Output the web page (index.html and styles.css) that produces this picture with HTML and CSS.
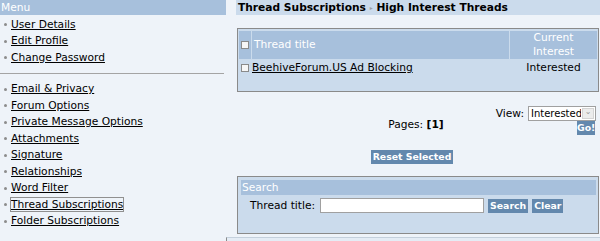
FILE: index.html
```html
<!DOCTYPE html>
<html lang="en">
<head>
	<meta charset="UTF-8">
	<title>Thread Subscriptions</title>
	<link rel="stylesheet" href="styles.css">
</head>
<body>
<div class="frames">
	<div class="nav">
		<div class="nav-head">Menu</div>
		<ul class="nav-list first">
			<li><a href="#">User Details</a></li>
			<li><a href="#">Edit Profile</a></li>
			<li><a href="#">Change Password</a></li>
		</ul>
		<hr class="nav-rule">
		<ul class="nav-list">
			<li><a href="#">Email &amp; Privacy</a></li>
			<li><a href="#">Forum Options</a></li>
			<li><a href="#">Private Message Options</a></li>
			<li><a href="#">Attachments</a></li>
			<li><a href="#">Signature</a></li>
			<li><a href="#">Relationships</a></li>
			<li><a href="#">Word Filter</a></li>
			<li><a href="#" class="focused">Thread Subscriptions</a></li>
			<li><a href="#">Folder Subscriptions</a></li>
		</ul>
	</div>
	<div class="main">
		<h1 class="crumb">Thread Subscriptions <span class="sep">&#9656;</span> High Interest Threads</h1>
		<div class="box">
			<table class="threads">
				<tr>
					<th class="check"><input type="checkbox"></th>
					<th class="title">Thread title</th>
					<th class="interest">Current<br>Interest</th>
				</tr>
				<tr>
					<td class="check"><input type="checkbox"></td>
					<td><a href="#">BeehiveForum.US Ad Blocking</a></td>
					<td class="interest">Interested</td>
				</tr>
				<tr class="spacer">
					<td colspan="3">&nbsp;</td>
				</tr>
			</table>
		</div>
		<div class="pager">
			<div></div>
			<div class="pages">Pages: <b>[1]</b></div>
			<div class="view">
				<div class="view-line">
					View:
					<span class="select">
						<select>
							<option>Interested</option>
						</select>
						<span class="select-arrow">&#8964;</span>
					</span>
				</div>
				<button class="button go">Go!</button>
			</div>
		</div>
		<div class="reset">
			<button class="button">Reset Selected</button>
		</div>
		<div class="box panel">
			<div class="panel-head">Search</div>
			<div class="search-row">
				<label>Thread title:</label>
				<input type="text" class="text">
				<button class="button">Search</button>
				<button class="button">Clear</button>
			</div>
		</div>
	</div>
</div>
<div class="foot"></div>
</body>
</html>
```

FILE: styles.css
```css
body {
	margin: 0;
	background: #eef3f9;
	font-family: "DejaVu Sans", Verdana, sans-serif;
	font-size: 8pt;
	color: #000;
}
a {
	color: #000;
}
.frames {
	display: flex;
	height: 237px;
	overflow: hidden;
}
.nav {
	width: 226px;
	flex: none;
}
.nav-head {
	height: 15px;
	line-height: 15px;
	padding-left: 1px;
	background: #a7c0dc;
	color: #fff;
}
.nav-list {
	list-style: none;
	margin: 0;
	padding: 0;
}
.nav-list.first {
	padding-top: 1.5px;
}
.nav-list li {
	line-height: 16.5px;
	padding-left: 4px;
}
.nav-list li::before {
	content: "";
	display: inline-block;
	width: 3px;
	height: 3px;
	margin-right: 4px;
	border-radius: 50%;
	background: #8c8c8c;
	vertical-align: middle;
}
.nav-list a.focused {
	outline: 1px solid #909090;
	outline-offset: 0;
}
.nav-rule {
	margin: 6.5px 2px 7.5px 0;
	border: 0;
	border-top: 1px solid #a4a4a4;
	height: 0;
}
.main {
	flex: 1;
	min-width: 0;
}
.crumb {
	margin: 0 0 13px 10px;
	height: 15px;
	line-height: 15px;
	padding-left: 2px;
	background: #cbdbec;
	font-size: 8pt;
	font-weight: bold;
}
.sep {
	color: #a0a0a0;
	font-size: 6px;
	vertical-align: 1px;
}
.box {
	margin: 0 1px 0 11px;
	padding-top: 1px;
	border: 1px solid #8a8a8a;
	background: #cbdbec;
}
.threads {
	width: 100%;
	border-spacing: 1px;
}
.threads th {
	background: #a7c0dc;
	color: #fff;
	font-weight: normal;
	line-height: 14px;
	padding: 0;
}
.threads td {
	line-height: 16px;
	padding: 0;
}
.threads .check {
	width: 12px;
	text-align: center;
}
.threads .title {
	text-align: left;
	padding-left: 2px;
}
.threads .interest {
	width: 87px;
	text-align: center;
}
.threads .spacer td {
	line-height: 13px;
}
input[type="checkbox"] {
	appearance: none;
	width: 8px;
	height: 8px;
	margin: 0;
	border: 1px solid #8a8a8a;
	background: #f6f6f6;
	vertical-align: middle;
}
.pager {
	display: grid;
	grid-template-columns: 1fr auto 1fr;
	margin: 13px 5px 0 11px;
}
.pages {
	padding-top: 13px;
}
.view {
	text-align: right;
}
.view-line {
	display: flex;
	justify-content: flex-end;
	align-items: center;
	gap: 4px;
	height: 16px;
	margin-right: -1px;
}
.select {
	display: inline-flex;
	align-items: stretch;
	height: 15px;
	width: 68px;
	box-sizing: border-box;
	border: 1px solid #a0a0a0;
	background: #fff;
}
.select select {
	appearance: none;
	flex: 1;
	min-width: 0;
	border: 0;
	margin: 0;
	padding: 0 0 0 2px;
	background: #fff;
	font-family: inherit;
	font-size: 10px;
	color: #000;
	outline: none;
}
.select-arrow {
	width: 10px;
	margin: 1px;
	background: #ececec;
	border: 1px solid #d4d4d4;
	color: #999;
	font-size: 8px;
	line-height: 6px;
	text-align: center;
}
.button {
	height: 14px;
	padding: 0 2px;
	border: 0;
	background: #6388ad;
	color: #fff;
	font-family: inherit;
	font-size: 7pt;
	font-weight: bold;
	line-height: 14px;
	cursor: pointer;
}
.go {
	padding: 0;
	width: 18px;
}
.reset {
	margin-top: 15px;
	text-align: center;
	padding-right: 2px;
}
.panel {
	margin-top: 12px;
	height: 58px;
	box-sizing: border-box;
	padding: 0;
}
.panel-head {
	margin: 3px 2px 0 3px;
	height: 15px;
	line-height: 15px;
	padding-left: 1px;
	background: #a7c0dc;
	color: #fff;
}
.search-row {
	display: flex;
	align-items: center;
	gap: 4px;
	margin-top: 3px;
	padding-left: 12px;
}
.search-row .text {
	width: 164px;
	height: 15px;
	box-sizing: border-box;
	margin: 0 0 0 1px;
	border: 1px solid #a0a0a0;
	background: #fff;
}
.foot {
	height: 4px;
	margin-left: 226px;
	border-top: 1px solid #c4d0dc;
	border-left: 1px solid #8a8a8a;
	background: #e4ecf5;
}
```
